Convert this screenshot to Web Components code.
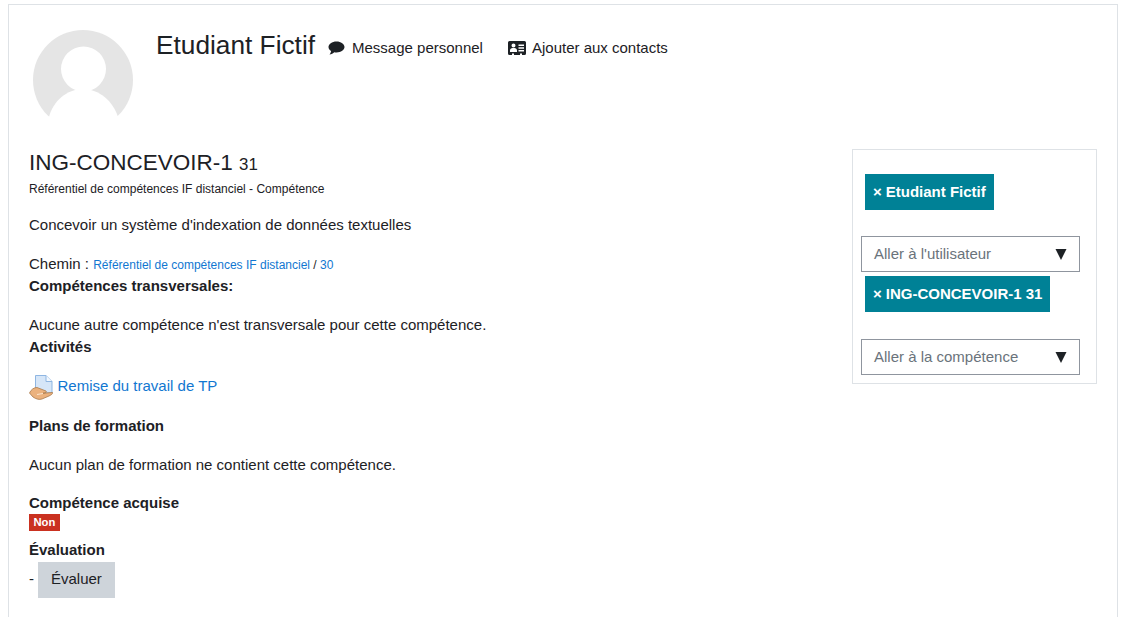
<!DOCTYPE html>
<html lang="fr">
<head>
<meta charset="utf-8">
<title>Etudiant Fictif</title>
<style>
  html, body { margin: 0; height: 100%; overflow: hidden; background: #fff; }
  body { padding: 4px 5px 0 8px; box-sizing: border-box; font: 15px/22.5px "Liberation Sans", Arial, sans-serif; color: #1d2125; }
</style>
</head>
<body>
<profile-card>
  <user-header slot="header" name="Etudiant Fictif"></user-header>
  <competency-detail slot="main"></competency-detail>
  <nav-panel slot="side"></nav-panel>
</profile-card>

<script>
// page frame
class profileCardComponent extends HTMLElement {
    constructor() {
        super();
        this.attachShadow({ mode: 'open' });
    }

    connectedCallback() {
        this.shadowRoot.innerHTML = `<style>
            :host {
                display: block;
                height: 613px;
                overflow: hidden;
                box-sizing: border-box;
                border: 1px solid #dee2e6;
                border-bottom: 0;
                padding: 25px 20px 0 20px;
            }
            .columns {
                display: flex;
                justify-content: space-between;
                align-items: flex-start;
            }
        </style>
        <slot name="header"></slot>
        <div class="columns">
            <slot name="main"></slot>
            <slot name="side"></slot>
        </div>`;
    }
}

// avatar, name and the two actions
class userHeaderComponent extends HTMLElement {
    constructor() {
        super();
        this.attachShadow({ mode: 'open' });
    }

    connectedCallback() {
        this.shadowRoot.innerHTML = `<style>
            :host {
                display: flex;
                align-items: flex-start;
                height: 119px;
                padding-left: 4px;
            }
            svg.avatar { width: 100px; height: 100px; flex: none; margin-right: 23px; }
            .name { font-size: 26.250px; line-height: 32px; margin: 0; font-weight: 400; position: relative; top: -1px; }
            .actions { display: flex; margin-left: 13px; margin-top: 7px; font-size: 15px; line-height: 22px; }
            .action { display: flex; align-items: center; margin-right: 25px; }
            .action svg { display: block; margin-right: 7px; }
            .action + .action svg { margin-right: 6px; }
        </style>
        <svg class="avatar" viewBox="0 0 100 100">
            <circle cx="50" cy="50" r="50" fill="#e5e5e5"/>
            <circle cx="50.500" cy="39" r="22.500" fill="#fff"/>
            <path d="M16 87 C20 71 34 59 50 59 C66 59 80 71 85 87 V100 H16 Z" fill="#fff"/>
        </svg>
        <h2 class="name">${this.getAttribute('name')}</h2>
        <div class="actions">
            <span class="action">
                <svg width="17" height="14" viewBox="0 0 17 14"><path d="M8.5 .5C13 .5 16.500 3 16.500 6C16.500 9 13 11.400 8.500 11.400C7.700 11.400 7 11.300 6.300 11.200C5.200 12.200 3.500 13.500 1.500 13.500C2.400 12.400 3 11 3.100 9.900C1.500 9 .5 7.600 .5 6C.5 3 4 .5 8.500 .5Z" fill="#1d2125"/></svg>
                Message personnel
            </span>
            <span class="action">
                <svg width="18" height="14" viewBox="0 0 18 14"><path fill-rule="evenodd" d="M1.500 0H16.500A1.500 1.500 0 0 1 18 1.500V12.500A1.500 1.500 0 0 1 16.500 14H14V12.500H12V14H6V12.500H4V14H1.500A1.500 1.500 0 0 1 0 12.500V1.500A1.500 1.500 0 0 1 1.500 0ZM5.500 2.500A2 2 0 1 0 5.500 6.500A2 2 0 1 0 5.500 2.500ZM2 11H9V9.500C9 8 7.800 7 6.500 7H4.500C3.200 7 2 8 2 9.500ZM10.500 3.500V5H16V3.500ZM10.500 6.200V7.700H16V6.200ZM10.500 8.900V10.400H16V8.900Z" fill="#1d2125"/></svg>
                Ajouter aux contacts
            </span>
        </div>`;
    }
}

// left column
class competencyDetailComponent extends HTMLElement {
    constructor() {
        super();
        this.attachShadow({ mode: 'open' });
    }

    connectedCallback() {
        this.shadowRoot.innerHTML = `<style>
            :host { display: block; width: 800px; }
            a { color: #1177d1; text-decoration: none; }
            h3 { font-size: 22.500px; line-height: 26px; font-weight: 400; margin: 1px 0 0; }
            h3 small { font-size: 16.875px; }
            .sub { font-size: 12px; line-height: 17px; margin: 3px 0 0; }
            p { margin: 0; }
            b { font-weight: 700; display: block; }
            .desc { margin-top: 16px; }
            .path { margin-top: 16px; height: 22px; }
            .path small { font-size: 12px; }
            .none { margin-top: 17px; }
            .first { margin-top: 17px; height: 22px; }
            .activity { display: flex; align-items: center; height: 28px; margin-top: 14px; }
            .activity svg { flex: none; margin-right: 4.500px; }
            .plans { margin-top: 14px; }
            .acquired { margin-top: 15px; }
            .badge { display: block; width: fit-content; background: #ca3120; color: #fff; font-size: 11.250px; font-weight: 700; line-height: 13px; padding: 2px 4.500px; }
            .eval { margin-top: 8px; }
            .eval-row { display: flex; align-items: center; }
            .eval-row button { font: inherit; color: #1d2125; background: #ced4da; border: 0; height: 36px; padding: 0 13px; margin: 0 0 0 4px; }
        </style>
        <h3>ING-CONCEVOIR-1 <small>31</small></h3>
        <p class="sub">Référentiel de compétences IF distanciel - Compétence</p>
        <p class="desc">Concevoir un système d'indexation de données textuelles</p>
        <p class="path">Chemin : <small><a href="#">Référentiel de compétences IF distanciel</a> / <a href="#">30</a></small></p>
        <b>Compétences transversales:</b>
        <p class="first">Aucune autre compétence n'est transversale pour cette compétence.</p>
        <b>Activités</b>
        <div class="activity">
            <svg width="24" height="26" viewBox="0 0 24 26">
                <path d="M6.500 1.500H17L23 7.500V19H6.500Z" fill="#d6e6f8" stroke="#8fb6e2"/>
                <path d="M17 1.500V7.500H23" fill="#f2f8fe" stroke="#8fb6e2"/>
                <path d="M.5 19C2 15.500 5 13.500 8 13.500L17 17C18 18 17 19 14 19.200L23.500 18.500C24 20 22 21 20 22L13 25C10 26 7 25 4 23Z" fill="#ebb27e" stroke="#a97a4a" stroke-width=".8"/>
                <path d="M8 20.500L14 19.500" stroke="#fbe6d0" stroke-width="1"/>
            </svg>
            <a href="#">Remise du travail de TP</a>
        </div>
        <b class="plans">Plans de formation</b>
        <p class="none">Aucun plan de formation ne contient cette compétence.</p>
        <b class="acquired">Compétence acquise</b>
        <span class="badge">Non</span>
        <b class="eval">Évaluation</b>
        <div class="eval-row"><span>-</span><button type="button">Évaluer</button></div>`;
    }
}

// right column
class navPanelComponent extends HTMLElement {
    constructor() {
        super();
        this.attachShadow({ mode: 'open' });
    }

    connectedCallback() {
        this.shadowRoot.innerHTML = `<style>
            :host {
                display: block;
                box-sizing: border-box;
                width: 245px;
                height: 235px;
                border: 1px solid #dee2e6;
                padding: 24px 16px 0 8px;
            }
        </style>
        <choice-chip>Etudiant Fictif</choice-chip>
        <jump-select gap="26">Aller à l'utilisateur</jump-select>
        <choice-chip gap="4">ING-CONCEVOIR-1 31</choice-chip>
        <jump-select gap="27">Aller à la compétence</jump-select>`;
    }
}

class choiceChipComponent extends HTMLElement {
    constructor() {
        super();
        this.attachShadow({ mode: 'open' });
    }

    connectedCallback() {
        this.shadowRoot.innerHTML = `<style>
            :host {
                display: block;
                width: fit-content;
                height: 36px;
                margin: ${this.getAttribute('gap') || 0}px 0 0 4px;
                padding: 0 8px;
                background: #008196;
                color: #fff;
                font-size: 15px;
                font-weight: 700;
                line-height: 36px;
            }
            span { margin-right: 4px; }
        </style>
        <span>×</span><slot></slot>`;
    }
}

class jumpSelectComponent extends HTMLElement {
    constructor() {
        super();
        this.attachShadow({ mode: 'open' });
    }

    connectedCallback() {
        this.shadowRoot.innerHTML = `<style>
            :host {
                display: flex;
                justify-content: space-between;
                align-items: center;
                box-sizing: border-box;
                width: 219px;
                height: 36px;
                margin-top: ${this.getAttribute('gap') || 0}px;
                padding: 0 12px;
                border: 1px solid #8f959e;
                color: #6a737b;
                font-size: 15px;
            }
            svg { display: block; }
        </style>
        <slot></slot>
        <svg width="12" height="11" viewBox="0 0 12 11"><path d="M.5 0H11.500L6 11Z" fill="#1d2125"/></svg>`;
    }
}

customElements.define('profile-card', profileCardComponent);
customElements.define('user-header', userHeaderComponent);
customElements.define('competency-detail', competencyDetailComponent);
customElements.define('nav-panel', navPanelComponent);
customElements.define('choice-chip', choiceChipComponent);
customElements.define('jump-select', jumpSelectComponent);
</script>
</body>
</html>
